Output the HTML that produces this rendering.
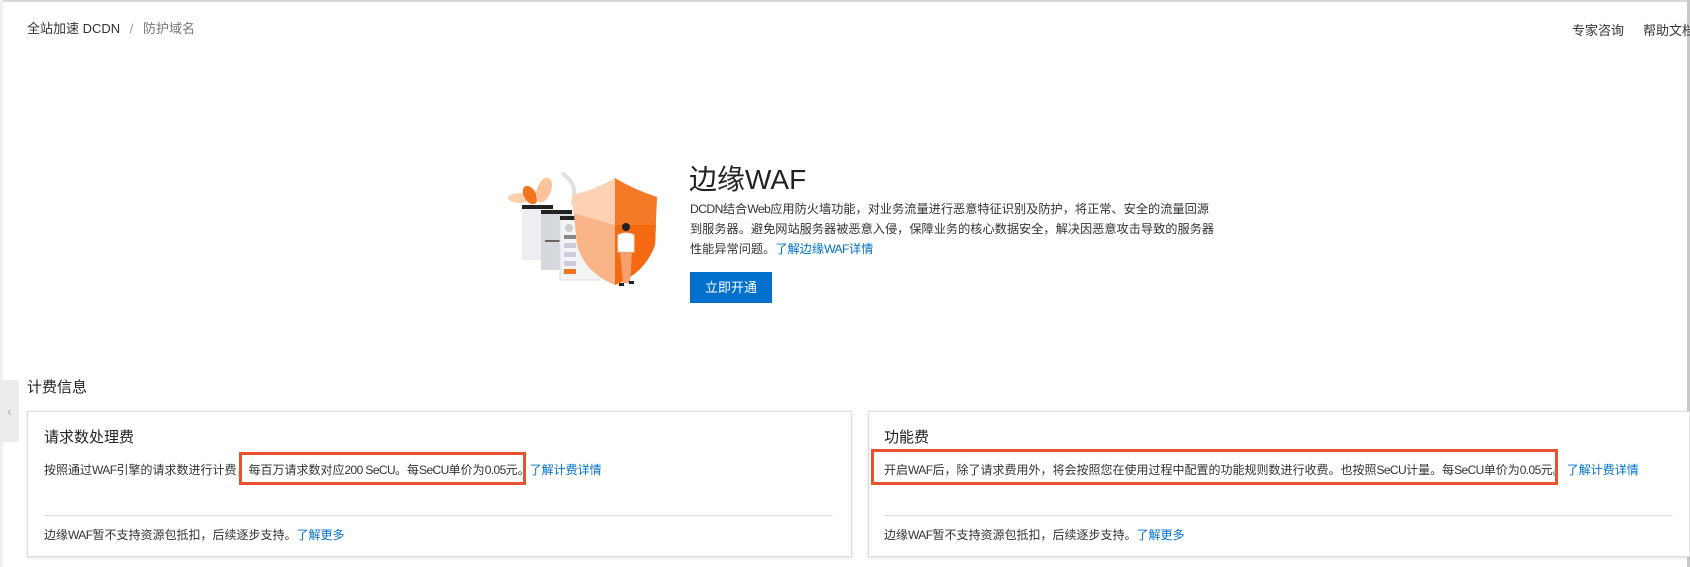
<!DOCTYPE html>
<html><head><meta charset="utf-8"><style>
*{margin:0;padding:0;box-sizing:border-box}
body{width:1690px;height:567px;overflow:hidden;background:#fff;font-family:"Liberation Sans","Noto Sans CJK SC",sans-serif;color:#333;position:relative}
.a{position:absolute;white-space:nowrap}
.blue{color:#0070cc}
.l{letter-spacing:-0.6px}
.card{position:absolute;border:1px solid #ddd;box-shadow:0 1px 3px rgba(0,0,0,.12);background:#fff}
.red{position:absolute;border:3px solid #e8522f}
</style></head><body>
<div class="a" style="left:0;top:0;width:1690px;height:2px;background:#d8d8d8"></div>
<div class="a" style="left:0;top:0;width:3px;height:567px;background:#f0f0f0"></div>
<div class="a" style="left:1687px;top:0;width:3px;height:567px;background:#c8c8c8"></div>
<div class="a" style="left:27px;top:18px;font-size:13px;color:#333">全站加速 DCDN <span style="color:#999;margin:0 6px">/</span> <span style="color:#777">防护域名</span></div>
<div class="a" style="left:1572px;top:20px;font-size:13px;color:#333">专家咨询</div>
<div class="a" style="left:1643px;top:20px;font-size:13px;color:#333">帮助文档</div>

<svg class="a" style="left:500px;top:165px" width="170" height="135" viewBox="0 0 170 135">
<path d="M62 8 Q80 20 72 40" stroke="#dde1e6" stroke-width="4" fill="none"/>
<ellipse cx="20" cy="33" rx="12" ry="5" fill="#fbd0b0"/>
<ellipse cx="30" cy="30" rx="6" ry="10" fill="#f47520" transform="rotate(-30 30 30)"/>
<ellipse cx="44" cy="25" rx="7" ry="13" fill="#fbc49c" transform="rotate(20 44 25)"/>
<rect x="22" y="40" width="31" height="55" fill="#eceef1"/><rect x="22" y="40" width="31" height="4" fill="#222"/>
<rect x="41" y="45" width="31" height="60" fill="#d5d9de"/><rect x="41" y="45" width="31" height="4" fill="#222"/>
<rect x="45" y="75" width="22" height="2" fill="#666"/>
<rect x="60" y="51" width="40" height="64" fill="#f3f4f6" stroke="#ddd"/><rect x="60" y="51" width="40" height="4" fill="#222"/>
<circle cx="69" cy="63" r="4" fill="#ccc"/><rect x="64" y="70" width="12" height="4" fill="#888"/>
<rect x="64" y="78" width="12" height="5" fill="#ccd"/><rect x="64" y="87" width="12" height="5" fill="#ccd"/><rect x="64" y="96" width="12" height="5" fill="#ccd"/>
<rect x="64" y="104" width="12" height="5" fill="#f47520"/>
<path d="M115 13 Q95 25 72 30 L77 80 Q85 108 115 120 Z" fill="#fbb488"/>
<path d="M115 13 L115 60 L73 48 L72 30 Q95 25 115 13Z" fill="#fdd2b4"/>
<path d="M115 13 Q135 25 157 32 L155 80 Q145 108 115 120 Z" fill="#f57a28"/>
<path d="M115 60 L156 60 L155 80 Q145 108 115 120Z" fill="#f56a10"/>
<circle cx="126" cy="62" r="4" fill="#222"/>
<path d="M118 70 Q126 66 134 70 L134 87 L118 87Z" fill="#fff" stroke="#ddd"/>
<path d="M120 87 L132 87 L130 118 L123 118Z" fill="#f5a070"/>
<rect x="119" y="118" width="5" height="3" fill="#222"/><rect x="129" y="116" width="5" height="3" fill="#222"/>
</svg>

<div class="a" style="left:689px;top:158px;font-size:28px;color:#222">边缘WAF</div>
<div class="a" style="left:690px;top:199px;font-size:12.2px;line-height:20px;color:#333"><span class="l">DCDN</span>结合<span class="l">Web</span>应用防火墙功能，对业务流量进行恶意特征识别及防护，将正常、安全的流量回源<br>到服务器。避免网站服务器被恶意入侵，保障业务的核心数据安全，解决因恶意攻击导致的服务器<br>性能异常问题。<span class="blue">了解边缘<span class="l">WAF</span>详情</span></div>
<div class="a" style="left:690px;top:272px;width:82px;height:31px;background:#0070cc;color:#fff;font-size:13px;line-height:31px;text-align:center">立即开通</div>

<div class="a" style="left:0;top:380px;width:19px;height:62px;background:#ececec;border-radius:0 3px 3px 0;color:#aaa;font-size:14px;line-height:62px;text-align:center">‹</div>
<div class="a" style="left:27px;top:376px;font-size:15px;color:#222">计费信息</div>

<div class="card" style="left:27px;top:411px;width:825px;height:146px"></div>
<div class="a" style="left:44px;top:461px;font-size:12px;color:#333">按照通过<span class="l">WAF</span>引擎的请求数进行计费，每百万请求数对应<span class="l">200 SeCU</span>。每<span class="l">SeCU</span>单价为<span class="l">0.05</span>元。<span class="blue">了解计费详情</span></div>
<div class="a" style="left:44px;top:426px;font-size:15px;color:#222">请求数处理费</div>
<div class="red" style="left:239px;top:452px;width:287px;height:33px"></div>
<div class="a" style="left:44px;top:515px;width:789px;height:1px;background:#ddd"></div>
<div class="a" style="left:44px;top:526px;font-size:12px;color:#333">边缘<span class="l">WAF</span>暂不支持资源包抵扣，后续逐步支持。<span class="blue">了解更多</span></div>

<div class="card" style="left:868px;top:411px;width:822px;height:146px"></div>
<div class="a" style="left:884px;top:426px;font-size:15px;color:#222">功能费</div>
<div class="a" style="left:884px;top:461px;font-size:12px;color:#333">开启<span class="l">WAF</span>后，除了请求费用外，将会按照您在使用过程中配置的功能规则数进行收费。也按照<span class="l">SeCU</span>计量。每<span class="l">SeCU</span>单价为<span class="l">0.05</span>元。<span class="blue" style="margin-left:2px">了解计费详情</span></div>
<div class="red" style="left:871px;top:449px;width:687px;height:36px"></div>
<div class="a" style="left:884px;top:515px;width:789px;height:1px;background:#ddd"></div>
<div class="a" style="left:884px;top:526px;font-size:12px;color:#333">边缘<span class="l">WAF</span>暂不支持资源包抵扣，后续逐步支持。<span class="blue">了解更多</span></div>
</body></html>
